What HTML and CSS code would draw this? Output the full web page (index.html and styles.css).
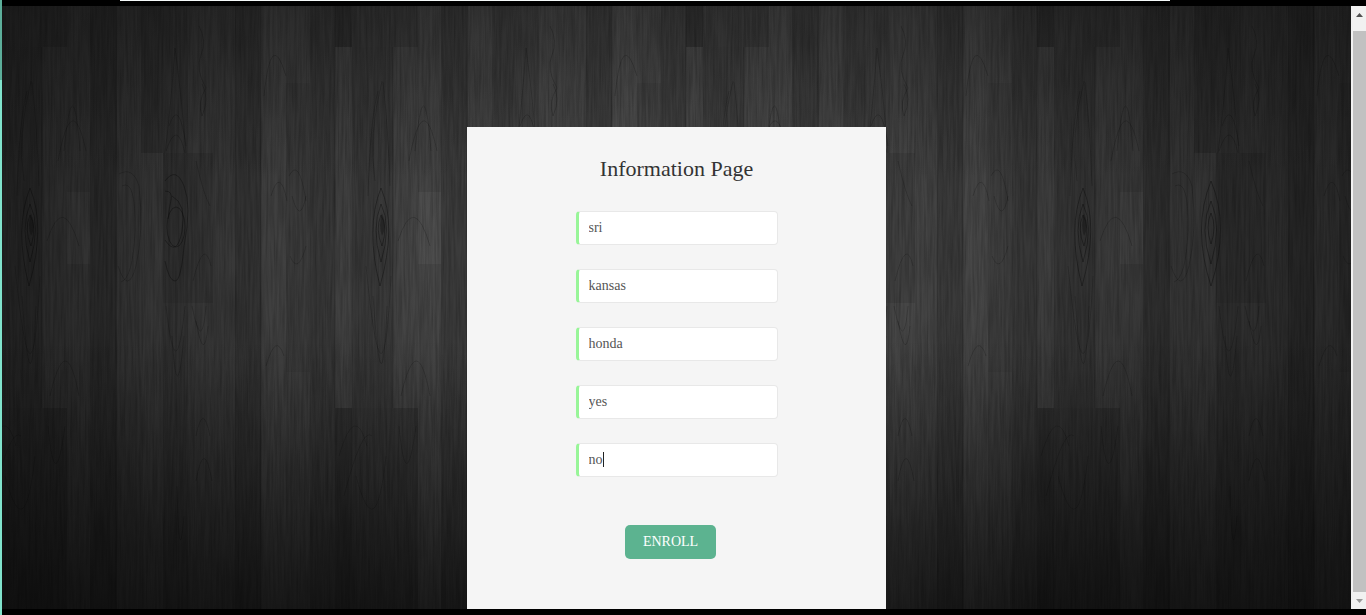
FILE: index.html
```html
<!DOCTYPE html>
<html lang="en">
<head>
<meta charset="utf-8">
<title>Information Page</title>
<link rel="stylesheet" href="styles.css">
</head>
<body>
<div class="frame">
  <div class="frame-top"><span class="tab-line"></span></div>
  <div class="view">
    <div class="edge"></div>
    <main class="page">
      <svg class="wood" viewBox="0 0 1349 603" preserveAspectRatio="none" aria-hidden="true">
        <defs>
          <pattern id="planks" x="114" y="0" width="351" height="603" patternUnits="userSpaceOnUse">
            <rect width="351" height="603" fill="#464646"/>
            <g fill="#000">
              <rect x="25" width="22" height="147" opacity=".12"/>
              <rect x="47" width="25" height="603" opacity=".09"/>
              <rect x="47" y="147" width="25" height="150" opacity=".06"/>
              <rect x="72" y="147" width="25" height="150" opacity=".1"/>
              <rect x="97" width="23" height="603" opacity=".03"/>
              <rect x="120" width="25" height="603" opacity=".14"/>
              <rect x="170" y="77" width="24" height="289" opacity=".05"/>
              <rect x="194" width="25" height="603" opacity=".13"/>
              <rect x="219" width="17" height="41" opacity=".25"/>
              <rect x="236" width="66" height="41" opacity=".12"/>
              <rect x="236" y="41" width="41" height="361" opacity=".15"/>
              <rect x="219" y="402" width="17" height="201" opacity=".24"/>
              <rect x="236" y="402" width="66" height="201" opacity=".17"/>
              <rect x="325" width="26" height="603" opacity=".16"/>
            </g>
            <g fill="#fff">
              <rect x="27" y="147" width="20" height="456" opacity=".015"/>
              <rect x="145" width="25" height="603" opacity=".02"/>
              <rect x="302" y="186" width="23" height="72" opacity=".035"/>
            </g>
            <g fill="none" stroke="#111" stroke-opacity=".25">
              <path d="M.5 0V603M119.500 0V603M145 0V603M219 0V402M277 41V402M351 0V603"/>
              <path d="M59 42Q65 85 70 147M59 42Q55 100 49 147M53 120Q63 90 70 140M50 145Q61 112 69 147M50 300Q60 390 69 300M56 330Q61 410 68 330M61 480Q63 570 68 510"/>
              <path d="M83 20Q91 35 85 49T90 82Q81 96 86 110Q94 92 86 78M76 300Q86 350 90 300M80 315Q88 360 92 320M80 430Q87 395 94 430M80 475Q88 430 96 475M80 155Q88 190 94 200M77 275Q88 230 95 260"/>
              <path d="M155 190Q164 160 171 195M173 170Q183 150 190 195M176 190Q184 220 190 190M174 250Q182 270 190 240M170 70Q155 20 148 90M150 360Q160 325 168 350"/>
              <path d="M266 75Q252 130 259 175M267 76Q272 120 274 180M262 85Q254 115 252 190M250 260Q267 430 275 270M257 290Q266 420 271 300"/>
              <path d="M223 450Q239 395 251 440M228 490Q246 420 256 430M240 470Q260 545 270 450M300 420Q290 495 283 420"/>
              <path d="M293 155Q307 80 321 145M299 145Q308 55 315 145M282 235Q298 185 314 240M285 390Q301 320 314 390"/>
              <path d="M3 168Q17 160 23 180Q28 225 20 260Q12 290 2 260M6 180Q20 172 19 225Q17 272 5 276"/>
            </g>
            <g fill="none" stroke="#0c0c0c" stroke-opacity=".42">
              <path d="M265 182Q249 222 264 280Q281 220 265 182M265 198Q255 222 265 256Q276 220 265 198M265 209Q259 223 266 240Q272 221 265 209"/>
            </g>
            <path d="M266 207Q262 220 266 230Q272 221 266 207" fill="#0c0c0c" opacity=".35"/>
          </pattern>
          <filter id="grain" x="0" y="0" width="100%" height="100%" color-interpolation-filters="sRGB">
            <feTurbulence type="fractalNoise" baseFrequency=".45 .018" numOctaves="3" seed="8"/>
            <feColorMatrix values="0 0 0 0 0  0 0 0 0 0  0 0 0 0 0  1 0 0 0 -.3"/>
          </filter>
          <radialGradient id="glow" gradientUnits="userSpaceOnUse" cx="0" cy="0" r="1" gradientTransform="translate(672 260) scale(800 520)">
            <stop offset="0" stop-color="#000" stop-opacity="0"/>
            <stop offset=".3" stop-color="#000" stop-opacity="0"/>
            <stop offset=".55" stop-color="#000" stop-opacity=".18"/>
            <stop offset=".82" stop-color="#000" stop-opacity=".43"/>
            <stop offset="1" stop-color="#000" stop-opacity=".52"/>
          </radialGradient>
          <linearGradient id="floor" x2="0" y2="1">
            <stop offset="0" stop-color="#000" stop-opacity=".12"/>
            <stop offset=".3" stop-color="#000" stop-opacity="0"/>
            <stop offset=".55" stop-color="#000" stop-opacity="0"/>
            <stop offset="1" stop-color="#000" stop-opacity=".42"/>
          </linearGradient>
        </defs>
        <rect width="1349" height="603" fill="url(#planks)"/>
        <g fill="none" stroke="#0c0c0c" stroke-opacity=".4">
          <ellipse cx="174" cy="221" rx="9" ry="20"/>
          <path d="M163 175Q174 160 182 180T182 240Q179 275 173 275T163 255M163 185Q171 185 169 194T166 213M163 234Q175 252 180 225T170 190"/>
          <path d="M1209 175Q1190 222 1209 280Q1228 220 1209 175M1209 195Q1197 222 1209 258Q1220 220 1209 195M1209 207Q1203 220 1209 238Q1215 221 1209 207"/>
        </g>
        <rect width="1349" height="603" filter="url(#grain)" opacity=".38"/>
        <rect width="1349" height="603" fill="url(#glow)"/>
        <rect width="1349" height="603" fill="url(#floor)"/>
      </svg>
      <form class="card">
        <h1 class="title">Information Page</h1>
        <div class="fields">
          <input class="field" type="text" aria-label="Name" value="sri">
          <input class="field" type="text" aria-label="State" value="kansas">
          <input class="field" type="text" aria-label="Car" value="honda">
          <input class="field" type="text" aria-label="Insured" value="yes">
          <div class="field-active">
            <input class="field" type="text" aria-label="Claims" value="no">
            <span class="caret"></span>
          </div>
        </div>
        <div class="actions"><button class="enroll" type="button">ENROLL</button></div>
      </form>
    </main>
    <div class="scrollbar">
      <button class="arrow" type="button" aria-label="Scroll up"><svg width="7" height="4" viewBox="0 0 7 4"><path d="M0 4L3.500 0L7 4Z" fill="#505050"/></svg></button>
      <div class="thumb"></div>
      <button class="arrow arrow-down" type="button" aria-label="Scroll down"><svg width="7" height="4" viewBox="0 0 7 4"><path d="M0 0L3.500 4L7 0Z" fill="#999"/></svg></button>
    </div>
  </div>
</div>
</body>
</html>
```
FILE: styles.css
```css
* { box-sizing: border-box; }

body {
  margin: 0;
  background: #000;
  font-family: "Liberation Serif", "Times New Roman", serif;
}

.frame {
  display: flex;
  flex-direction: column;
  min-height: 100vh;
  padding-bottom: 6px;
  background: linear-gradient(#5cae9a 80px, #80e3cc 80px) left / 2px 100% no-repeat;
}

.frame-top {
  height: 6px;
  padding: 0 196px 0 120px;
}

.tab-line {
  display: block;
  height: 1px;
  background: #f4f8f8;
}

.view {
  display: flex;
  flex: 1;
}

.edge { width: 2px; }

.page {
  position: relative;
  display: flex;
  flex: 1;
  justify-content: center;
  padding-top: 121px;
  background: #1c1c1c;
}

.wood {
  position: absolute;
  inset: 0;
  width: 100%;
  height: 100%;
}

.card {
  position: relative;
  width: 100%;
  max-width: 419px;
  padding: 28px 20px 48px;
  background: #f5f5f5;
}

.title {
  margin: 0 0 28px;
  color: #333;
  font-size: 22px;
  font-weight: 400;
  line-height: 28px;
  text-align: center;
}

.fields {
  display: flex;
  flex-direction: column;
  gap: 24px;
  width: 202px;
  margin: 0 auto;
}

.field {
  display: block;
  width: 100%;
  height: 34px;
  padding: 0 10px;
  border: 1px solid #e8e8e8;
  border-left: 3px solid #98f598;
  border-radius: 4px;
  background: #fff;
  color: #555;
  font-family: inherit;
  font-size: 14px;
}

.field-active { position: relative; }

.caret {
  position: absolute;
  top: 9px;
  left: 27px;
  width: 1px;
  height: 15px;
  background: #222;
}

.actions {
  display: flex;
  justify-content: center;
  padding: 48px 12px 0 0;
}

.enroll {
  height: 34px;
  padding: 0 18px;
  border: 0;
  border-radius: 5px;
  background: #5cb390;
  color: #fff;
  font-family: inherit;
  font-size: 14px;
}

.scrollbar {
  display: flex;
  flex-direction: column;
  width: 15px;
  background: #f1f1f1;
}

.arrow {
  display: flex;
  align-items: center;
  justify-content: center;
  height: 25px;
  padding: 0 0 7px 2px;
  border: 0;
  background: none;
}

.arrow-down {
  height: 17px;
  padding: 0 0 0 2px;
}

.thumb {
  flex: 1;
  margin-left: 2px;
  background: #c1c1c1;
}
```
